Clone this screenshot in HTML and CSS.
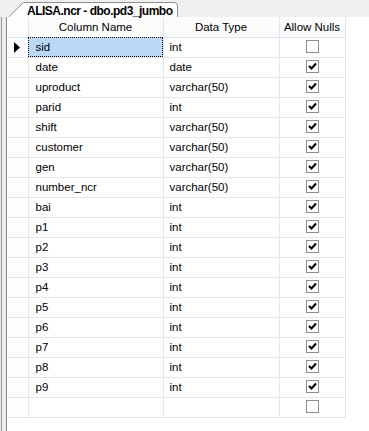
FILE: index.html
```html
<!doctype html>
<html lang="en">
	<head>
		<meta charset="utf-8">
		<title>ALISA.ncr - dbo.pd3_jumbo</title>
		<link rel="stylesheet" href="styles.css">
	</head>
  <body>
    <div class="tabbar">
      <div class="tab">
        <svg class="tab-shape" width="172" height="17" viewBox="0 0 172 17">
          <path d="M0.5 17 L15.5 2.5 L166 2.5 Q169.5 2.5 169.5 6 L169.5 17" fill="#fff" stroke="#8d8d8d"/>
        </svg>
        <span class="tab-title">ALISA.ncr - dbo.pd3_jumbo</span>
      </div>
    </div>

    <div class="designer">
      <div class="frame"></div>
      <table class="grid">
        <colgroup>
          <col class="col-sel">
          <col class="col-name">
          <col class="col-type">
          <col class="col-null">
        </colgroup>
        <thead>
          <tr>
            <th class="rowhead"></th>
            <th>Column Name</th>
            <th>Data Type</th>
            <th>Allow Nulls</th>
          </tr>
        </thead>
        <tbody>
          <tr>
            <td class="rowhead"><svg class="arrow" width="7" height="11" viewBox="0 0 7 11"><path d="M0 0 L6 5.5 L0 11 Z" fill="#000"/></svg></td>
            <td class="name selected">sid</td>
            <td class="type">int</td>
            <td class="null"><span class="check"></span></td>
          </tr>
          <tr><td class="rowhead"></td><td class="name">date</td><td class="type">date</td><td class="null"><span class="check on"></span></td></tr>
          <tr><td class="rowhead"></td><td class="name">uproduct</td><td class="type">varchar(50)</td><td class="null"><span class="check on"></span></td></tr>
          <tr><td class="rowhead"></td><td class="name">parid</td><td class="type">int</td><td class="null"><span class="check on"></span></td></tr>
          <tr><td class="rowhead"></td><td class="name">shift</td><td class="type">varchar(50)</td><td class="null"><span class="check on"></span></td></tr>
          <tr><td class="rowhead"></td><td class="name">customer</td><td class="type">varchar(50)</td><td class="null"><span class="check on"></span></td></tr>
          <tr><td class="rowhead"></td><td class="name">gen</td><td class="type">varchar(50)</td><td class="null"><span class="check on"></span></td></tr>
          <tr><td class="rowhead"></td><td class="name">number_ncr</td><td class="type">varchar(50)</td><td class="null"><span class="check on"></span></td></tr>
          <tr><td class="rowhead"></td><td class="name">bai</td><td class="type">int</td><td class="null"><span class="check on"></span></td></tr>
          <tr><td class="rowhead"></td><td class="name">p1</td><td class="type">int</td><td class="null"><span class="check on"></span></td></tr>
          <tr><td class="rowhead"></td><td class="name">p2</td><td class="type">int</td><td class="null"><span class="check on"></span></td></tr>
          <tr><td class="rowhead"></td><td class="name">p3</td><td class="type">int</td><td class="null"><span class="check on"></span></td></tr>
          <tr><td class="rowhead"></td><td class="name">p4</td><td class="type">int</td><td class="null"><span class="check on"></span></td></tr>
          <tr><td class="rowhead"></td><td class="name">p5</td><td class="type">int</td><td class="null"><span class="check on"></span></td></tr>
          <tr><td class="rowhead"></td><td class="name">p6</td><td class="type">int</td><td class="null"><span class="check on"></span></td></tr>
          <tr><td class="rowhead"></td><td class="name">p7</td><td class="type">int</td><td class="null"><span class="check on"></span></td></tr>
          <tr><td class="rowhead"></td><td class="name">p8</td><td class="type">int</td><td class="null"><span class="check on"></span></td></tr>
          <tr><td class="rowhead"></td><td class="name">p9</td><td class="type">int</td><td class="null"><span class="check on"></span></td></tr>
          <tr><td class="rowhead"></td><td class="name"></td><td class="type"></td><td class="null"><span class="check"></span></td></tr>
        </tbody>
      </table>
    </div>
  </body>
</html>
```

FILE: styles.css
```css
* { box-sizing: border-box; }

:root {
	--font-family: "Liberation Sans", Arial, sans-serif;
	--grid-line: #e6e6e6;
	--head-line: #dce5f1;
	--frame-gray: #f0f0f0;
}

html,
body {
	margin: 0;
	padding: 0;
	height: 100%;
	background: #fff;
	font-family: var(--font-family);
	font-size: 11.5px;
	color: #000;
}

body {
	display: flex;
	flex-direction: column;
}

/* Tab strip */
.tabbar {
	height: 17px;
	flex: none;
	background: var(--frame-gray);
	display: flex;
	align-items: flex-end;
	padding-left: 8px;
}

.tab {
	position: relative;
	width: 172px;
	height: 17px;
	display: flex;
	align-items: center;
	padding-left: 19px;
	padding-top: 4px;
}

.tab-shape {
	position: absolute;
	left: 0;
	top: 0;
}

.tab-title {
	position: relative;
	font-weight: bold;
	font-size: 12px;
	letter-spacing: -0.5px;
	white-space: nowrap;
}

/* Designer */
.designer {
	flex: 1;
	display: flex;
}

.frame {
	width: 8px;
	flex: none;
	background: linear-gradient(to right, #e6e6e6 0 1px, #9c9c9c 1px 2px, #ececec 2px 6px, #8a8a8a 6px 7px, #fff 7px);
}

.grid {
	border-collapse: collapse;
	table-layout: fixed;
	width: 337px;
	align-self: flex-start;
}

.col-sel { width: 20px; }
.col-name { width: 135px; }
.col-type { width: 116px; }
.col-null { width: 66px; }

.grid th {
	height: 20px;
	font-weight: normal;
	text-align: center;
	padding: 0;
	background: #fcfcfd;
	border-right: 1px solid var(--head-line);
	border-bottom: 1px solid var(--head-line);
}

.grid td {
	height: 20px;
	padding: 0;
	border-right: 1px solid var(--grid-line);
	border-bottom: 1px solid var(--grid-line);
	white-space: nowrap;
}

.grid .rowhead {
	background: #fdfdfe;
	border-bottom-color: var(--head-line);
	border-right-color: var(--grid-line);
	padding-left: 6px;
}

.arrow {
	display: block;
}

.name {
	padding-left: 7px !important;
}

.type {
	padding-left: 6px !important;
}

.selected {
	background: #b9d7f7;
	outline: 1px dotted #000;
	outline-offset: -1px;
}

.null {
	text-align: center;
}

.check {
	display: inline-block;
	width: 13px;
	height: 13px;
	border: 1px solid #8e8e8e;
	background: #fff;
	vertical-align: middle;
	margin-top: -2px;
}

.check.on {
	background: #fff url("data:image/svg+xml,%3Csvg xmlns='http://www.w3.org/2000/svg' width='11' height='11'%3E%3Cpath d='M2 5 L4.5 7.5 L9 2.5' fill='none' stroke='%23000' stroke-width='2'/%3E%3C/svg%3E") no-repeat center;
}
```
